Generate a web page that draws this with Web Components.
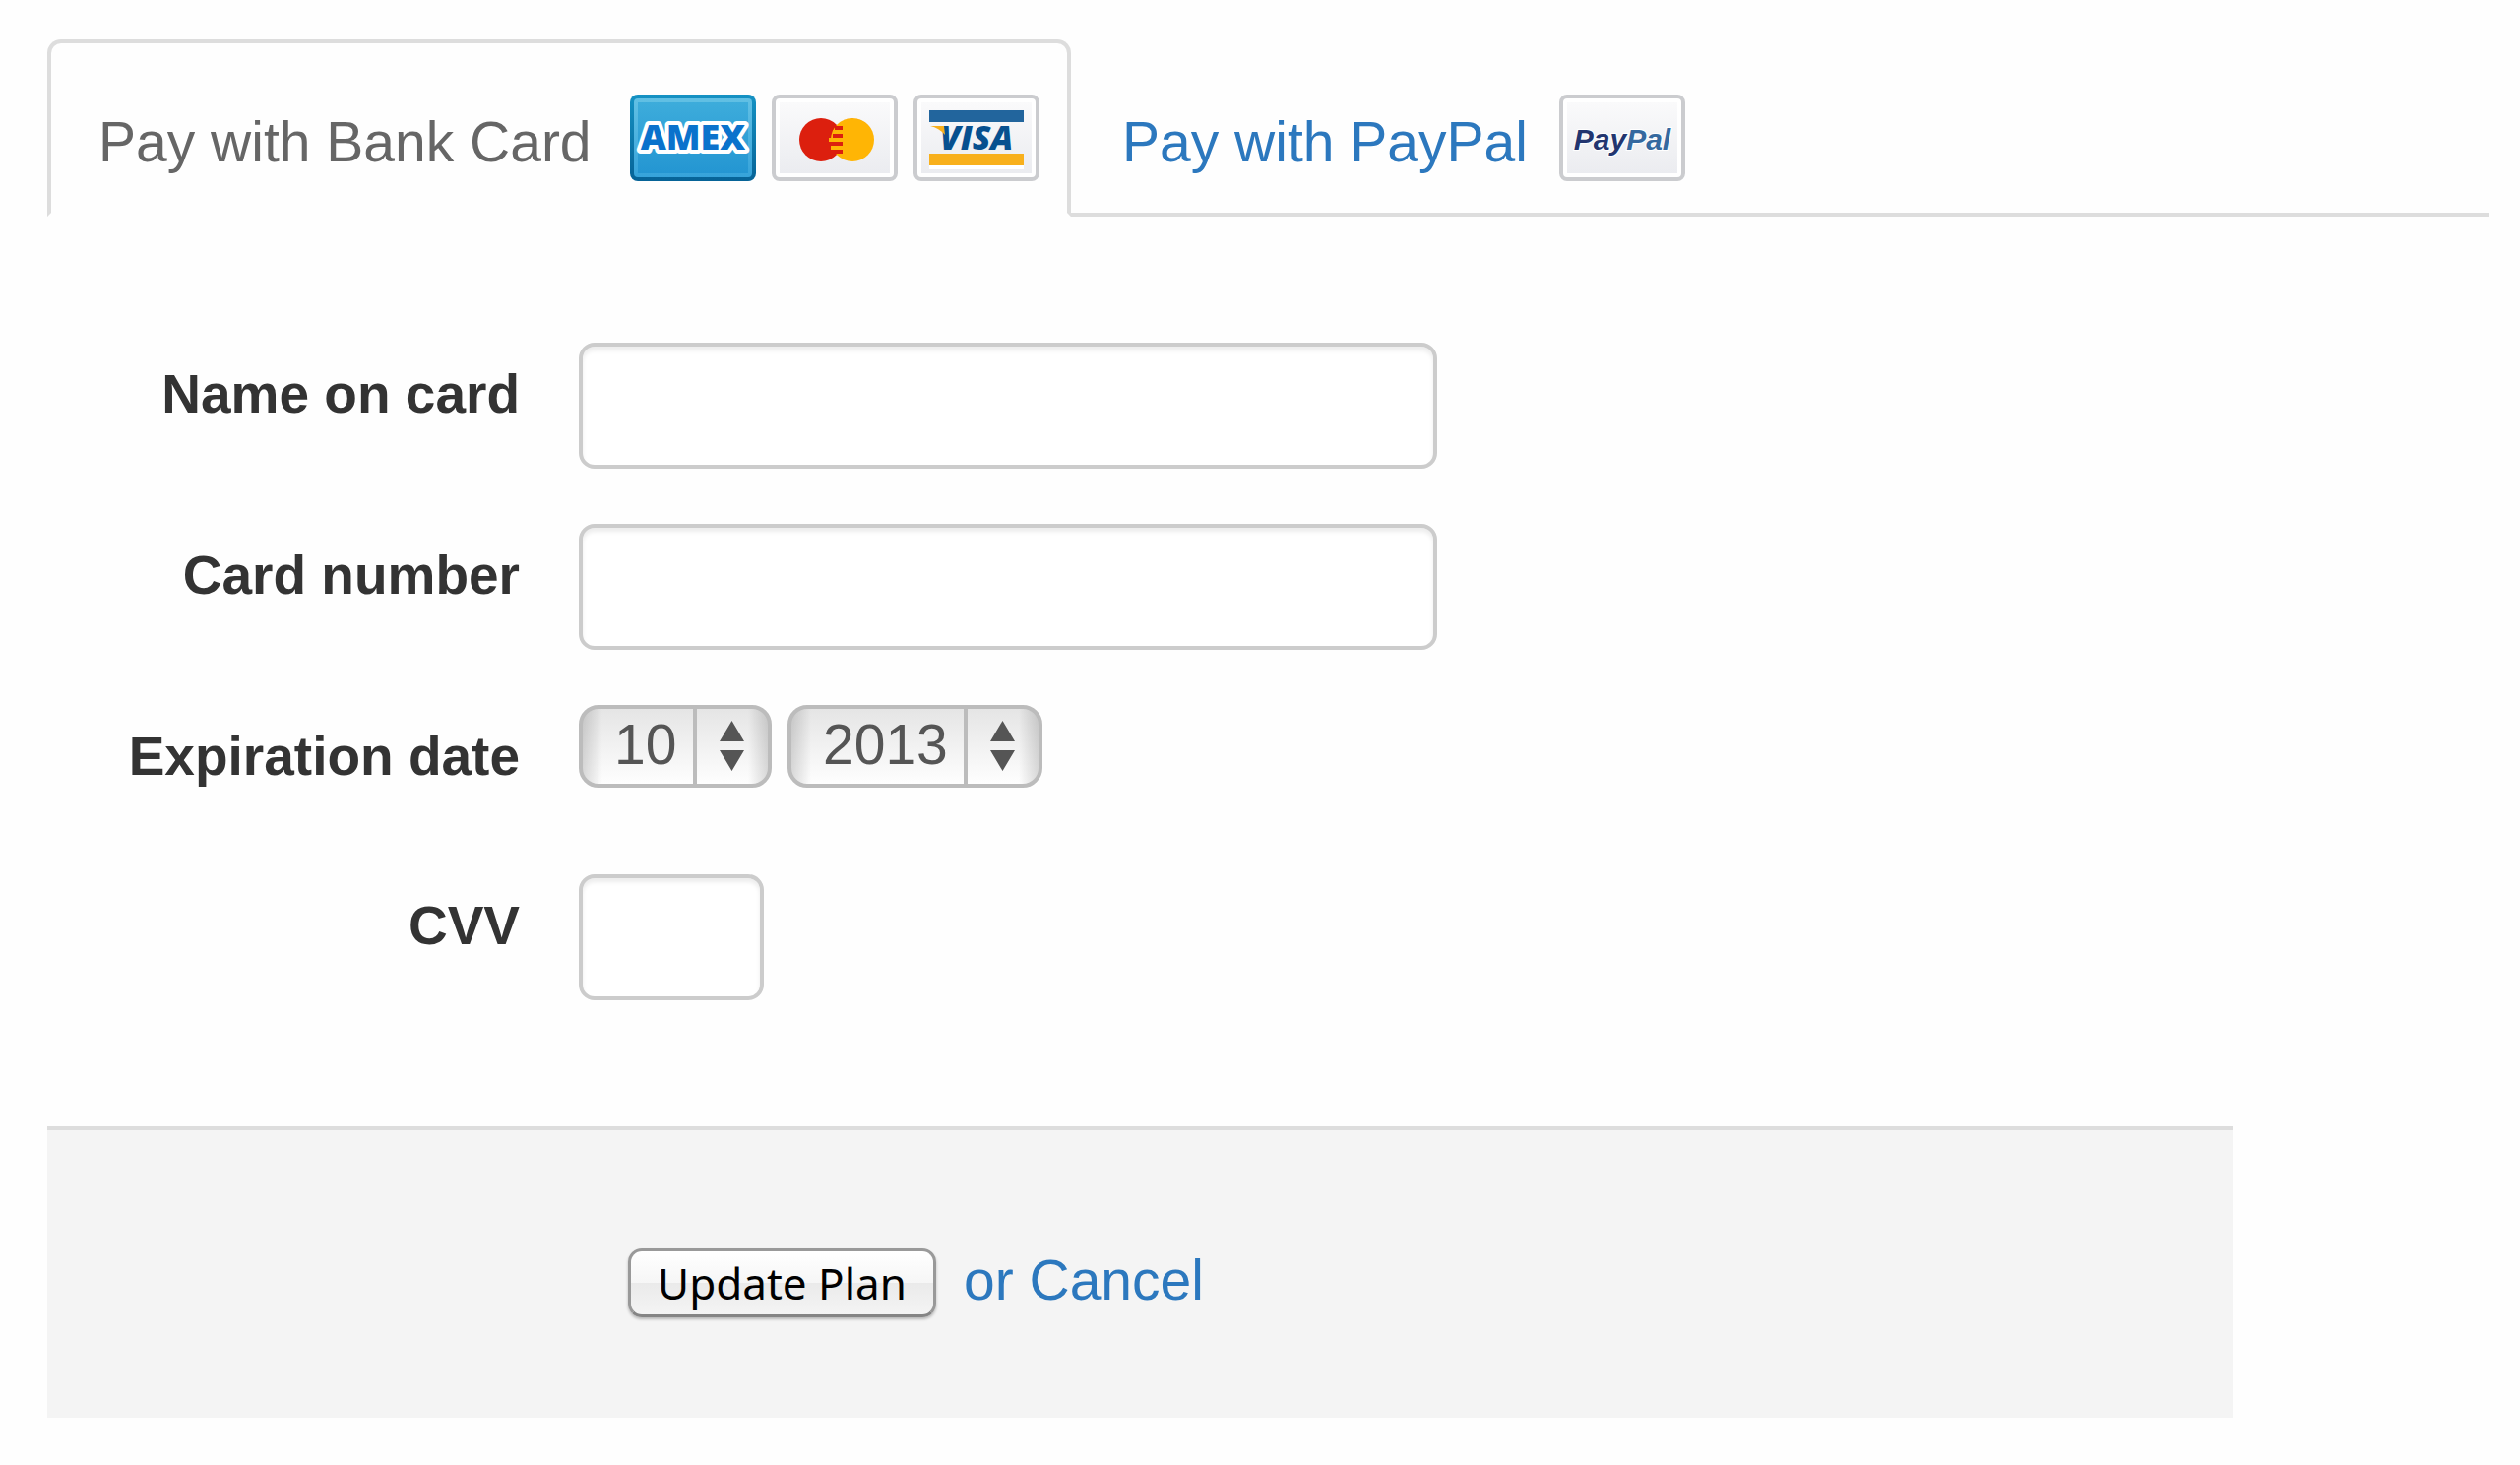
<!DOCTYPE html>
<html lang="en">
<head>
<meta charset="utf-8">
<title>Payment details</title>
<style>
  body {
    margin: 0;
    padding: 40px 32px 48px 48px;
    background: #fefefe;
    color: #333;
    font: 57px/80px "Liberation Sans", Arial, sans-serif;
  }
</style>
</head>
<body>
<payment-page></payment-page>

<script>
// card-icon.js
const cardArt = {
  amex: `
    <defs>
      <linearGradient id="edge" x2="0" y2="1"><stop offset="0" stop-color="#1592c4"/><stop offset="1" stop-color="#066397"/></linearGradient>
      <linearGradient id="rim" x2="0" y2="1"><stop offset="0" stop-color="#62c0e4"/><stop offset="1" stop-color="#36a3da"/></linearGradient>
      <linearGradient id="face" x2="0" y2="1"><stop offset="0" stop-color="#3dacdb"/><stop offset="1" stop-color="#2496d2"/></linearGradient>
    </defs>
    <rect width="128" height="88" rx="8" fill="url(#edge)"/>
    <rect x="4" y="4" width="120" height="80" rx="4" fill="url(#rim)"/>
    <rect x="8" y="8" width="112" height="72" fill="url(#face)"/>
    <text x="64" y="56" text-anchor="middle" font-family="Open Sans" font-weight="800" font-size="36"
      fill="#0a72cc" stroke="#fff" stroke-width="8" stroke-linejoin="round" paint-order="stroke">AMEX</text>`,
  mastercard: `
    <circle cx="50" cy="46" r="22" fill="#dc1f0e"/>
    <circle cx="82" cy="46" r="22" fill="#ffb505"/>
    <path d="M67 30a22 22 0 0 1 23-4a22 22 0 0 1 13 14a22 22 0 0 0-36-10z" fill="#fba106"/>
    <path d="M64 32h8v4h-8zM62 40h10v4H62zM59 48h13v4H59zM62 56h10v4H62z" fill="#dc1f0e"/>
    <path d="M62 36h10v4H62zM58 44h14v4H58zM60 52h12v4H60z" fill="#ffb505"/>`,
  visa: `
    <path d="M16 16h96v12H16z" fill="#22659d"/>
    <path d="M16 60h96v12H16z" fill="#f8b01c"/>
    <path d="M16 72h96v4H16z" fill="#fff"/>
    <text x="64" y="56" text-anchor="middle" font-family="Open Sans" font-weight="800" font-style="italic" font-size="34" fill="#07508f">VISA</text>
    <path d="M17 32h14l1 9q-6-7-15-9z" fill="#f8b01c"/>`,
  paypal: `
    <text x="64" y="56" text-anchor="middle" font-family="Liberation Sans" font-weight="700" font-style="italic" font-size="30"
      fill="#22356f" stroke="#fff" stroke-width="2" paint-order="stroke">Pay<tspan fill="#35699f">Pal</tspan></text>`
};

class CardIcon extends HTMLElement {
  constructor() {
    super();
    this.attachShadow({ mode: 'open' });
  }

  connectedCallback() {
    const brand = this.getAttribute('brand');
    const blank = `
      <defs><linearGradient id="paper" x2="0" y2="1"><stop offset="0" stop-color="#fafafb"/><stop offset="1" stop-color="#ebecf0"/></linearGradient></defs>
      <rect x="2" y="2" width="124" height="84" rx="6" fill="#fff" stroke="#cbcccf" stroke-width="4"/>
      <rect x="8" y="8" width="112" height="72" fill="url(#paper)"/>`;
    this.shadowRoot.innerHTML = `
      <style>
        :host { display: block; flex: none; }
        svg { display: block; width: 128px; height: 88px; }
      </style>
      <svg viewBox="0 0 128 88" role="img" aria-label="${brand}">
        ${brand === 'amex' ? '' : blank}
        ${cardArt[brand]}
      </svg>
    `;
  }
}
customElements.define('card-icon', CardIcon);

// pay-tab.js
class PayTab extends HTMLElement {
  constructor() {
    super();
    this.attachShadow({ mode: 'open' });
    this.shadowRoot.innerHTML = `
      <style>
        :host { display: block; margin-bottom: -4px; }
        :host([active]) { min-width: 1040px; }
        a {
          display: flex;
          align-items: center;
          gap: 16px;
          padding: 48px 28px 28px 48px;
          border: 4px solid transparent;
          border-radius: 14px 14px 0 0;
          color: #2c78be;
          text-decoration: none;
          white-space: nowrap;
        }
        :host([active]) a {
          color: #666;
          background: #fefefe;
          border-color: #ddd #ddd #fefefe;
        }
        span { flex: 1; padding-top: 8px; margin-right: 16px; line-height: 88px; }
      </style>
      <a href="#"><span><slot></slot></span><slot name="icon"></slot></a>
    `;
  }
}
customElements.define('pay-tab', PayTab);

// pay-tabs.js
class PayTabs extends HTMLElement {
  constructor() {
    super();
    this.attachShadow({ mode: 'open' });
    this.shadowRoot.innerHTML = `
      <style>
        :host { display: block; }
        nav { display: flex; border-bottom: 4px solid #ddd; }
      </style>
      <nav><slot></slot></nav>
    `;
  }
}
customElements.define('pay-tabs', PayTabs);

// Shared by every labelled row of the form
const rowStyles = `
  :host {
    display: grid;
    grid-template-columns: 480px 1fr;
    column-gap: 60px;
    align-items: start;
    min-height: 116px;
  }
  label {
    padding-top: 12px;
    text-align: right;
    font-size: 55px;
    font-weight: bold;
  }
`;

// text-row.js
class TextRow extends HTMLElement {
  constructor() {
    super();
    this.attachShadow({ mode: 'open' });
  }

  connectedCallback() {
    this.shadowRoot.innerHTML = `
      <style>
        ${rowStyles}
        input {
          box-sizing: border-box;
          width: 872px;
          height: 128px;
          padding: 16px 24px;
          border: 4px solid #ccc;
          border-radius: 16px;
          background: #fff;
          box-shadow: inset 0 4px 4px rgba(0, 0, 0, 0.075);
          color: #555;
          font: inherit;
        }
        :host([short]) input { width: 188px; }
      </style>
      <label for="field">${this.getAttribute('label')}</label>
      <div><input id="field" type="text" name="${this.getAttribute('name')}"></div>
    `;
  }
}
customElements.define('text-row', TextRow);

// date-row.js
class DateRow extends HTMLElement {
  constructor() {
    super();
    this.attachShadow({ mode: 'open' });
  }

  select(id, name, value) {
    return `
      <div class="select">
        <select id="${id}" aria-label="${name}"><option>${value}</option></select>
        <svg viewBox="0 0 80 84" aria-hidden="true">
          <path d="M0 4h4v76H0z" fill="#bcbcbc"/>
          <path d="M39.500 16L52 37H27zM27 46h25L39.500 67z" fill="#555"/>
        </svg>
      </div>
    `;
  }

  connectedCallback() {
    this.shadowRoot.innerHTML = `
      <style>
        ${rowStyles}
        .selects { display: flex; gap: 16px; }
        .select { position: relative; }
        select {
          appearance: none;
          display: block;
          box-sizing: border-box;
          height: 84px;
          padding: 0 92px 4px 32px;
          border: 4px solid #bcbcbc;
          border-radius: 20px;
          background:
            linear-gradient(to right, rgba(0, 0, 0, 0.14), transparent 20px, transparent calc(100% - 20px), rgba(0, 0, 0, 0.14)),
            linear-gradient(#e5e5e5, #fefefe);
          color: #555;
          font: inherit;
          line-height: 72px;
        }
        svg {
          position: absolute;
          top: 0;
          right: 0;
          width: 80px;
          height: 84px;
          pointer-events: none;
        }
      </style>
      <label for="month">${this.getAttribute('label')}</label>
      <div class="selects">
        ${this.select('month', 'Month', this.getAttribute('month'))}
        ${this.select('year', 'Year', this.getAttribute('year'))}
      </div>
    `;
  }
}
customElements.define('date-row', DateRow);

// form-actions.js
class FormActions extends HTMLElement {
  constructor() {
    super();
    this.attachShadow({ mode: 'open' });
    this.shadowRoot.innerHTML = `
      <style>
        :host {
          display: flex;
          align-items: baseline;
          gap: 28px;
          padding: 112px 0 100px 590px;
          border-top: 4px solid #ddd;
          background: #f4f4f4;
        }
        button {
          box-sizing: border-box;
          height: 70px;
          padding: 0 27px;
          border: 3px solid #999;
          border-bottom-color: #858585;
          border-radius: 14px;
          background: linear-gradient(#fff, #f6f6f6 50%, #eaeaea 50%, #f4f4f4);
          box-shadow: 0 2px 3px rgba(0, 0, 0, 0.25);
          color: #000;
          font: 44px/64px "Noto Sans", sans-serif;
        }
        a { color: #2c78be; text-decoration: none; }
      </style>
      <button type="submit"><slot></slot></button>
      <a href="#">or Cancel</a>
    `;
  }
}
customElements.define('form-actions', FormActions);

// payment-page.js
class PaymentPage extends HTMLElement {
  constructor() {
    super();
    this.attachShadow({ mode: 'open' });
    this.shadowRoot.innerHTML = `
      <style>
        :host { display: block; }
        .fields {
          display: flex;
          flex-direction: column;
          gap: 56px;
          padding: 128px 0;
        }
        form-actions { margin-right: 260px; }
      </style>
      <pay-tabs>
        <pay-tab active>Pay with Bank Card
          <card-icon slot="icon" brand="amex"></card-icon>
          <card-icon slot="icon" brand="mastercard"></card-icon>
          <card-icon slot="icon" brand="visa"></card-icon>
        </pay-tab>
        <pay-tab>Pay with PayPal
          <card-icon slot="icon" brand="paypal"></card-icon>
        </pay-tab>
      </pay-tabs>
      <form>
        <div class="fields">
          <text-row label="Name on card" name="name"></text-row>
          <text-row label="Card number" name="number"></text-row>
          <date-row label="Expiration date" month="10" year="2013"></date-row>
          <text-row label="CVV" name="cvv" short></text-row>
        </div>
        <form-actions>Update Plan</form-actions>
      </form>
    `;
  }
}
customElements.define('payment-page', PaymentPage);
</script>
</body>
</html>
